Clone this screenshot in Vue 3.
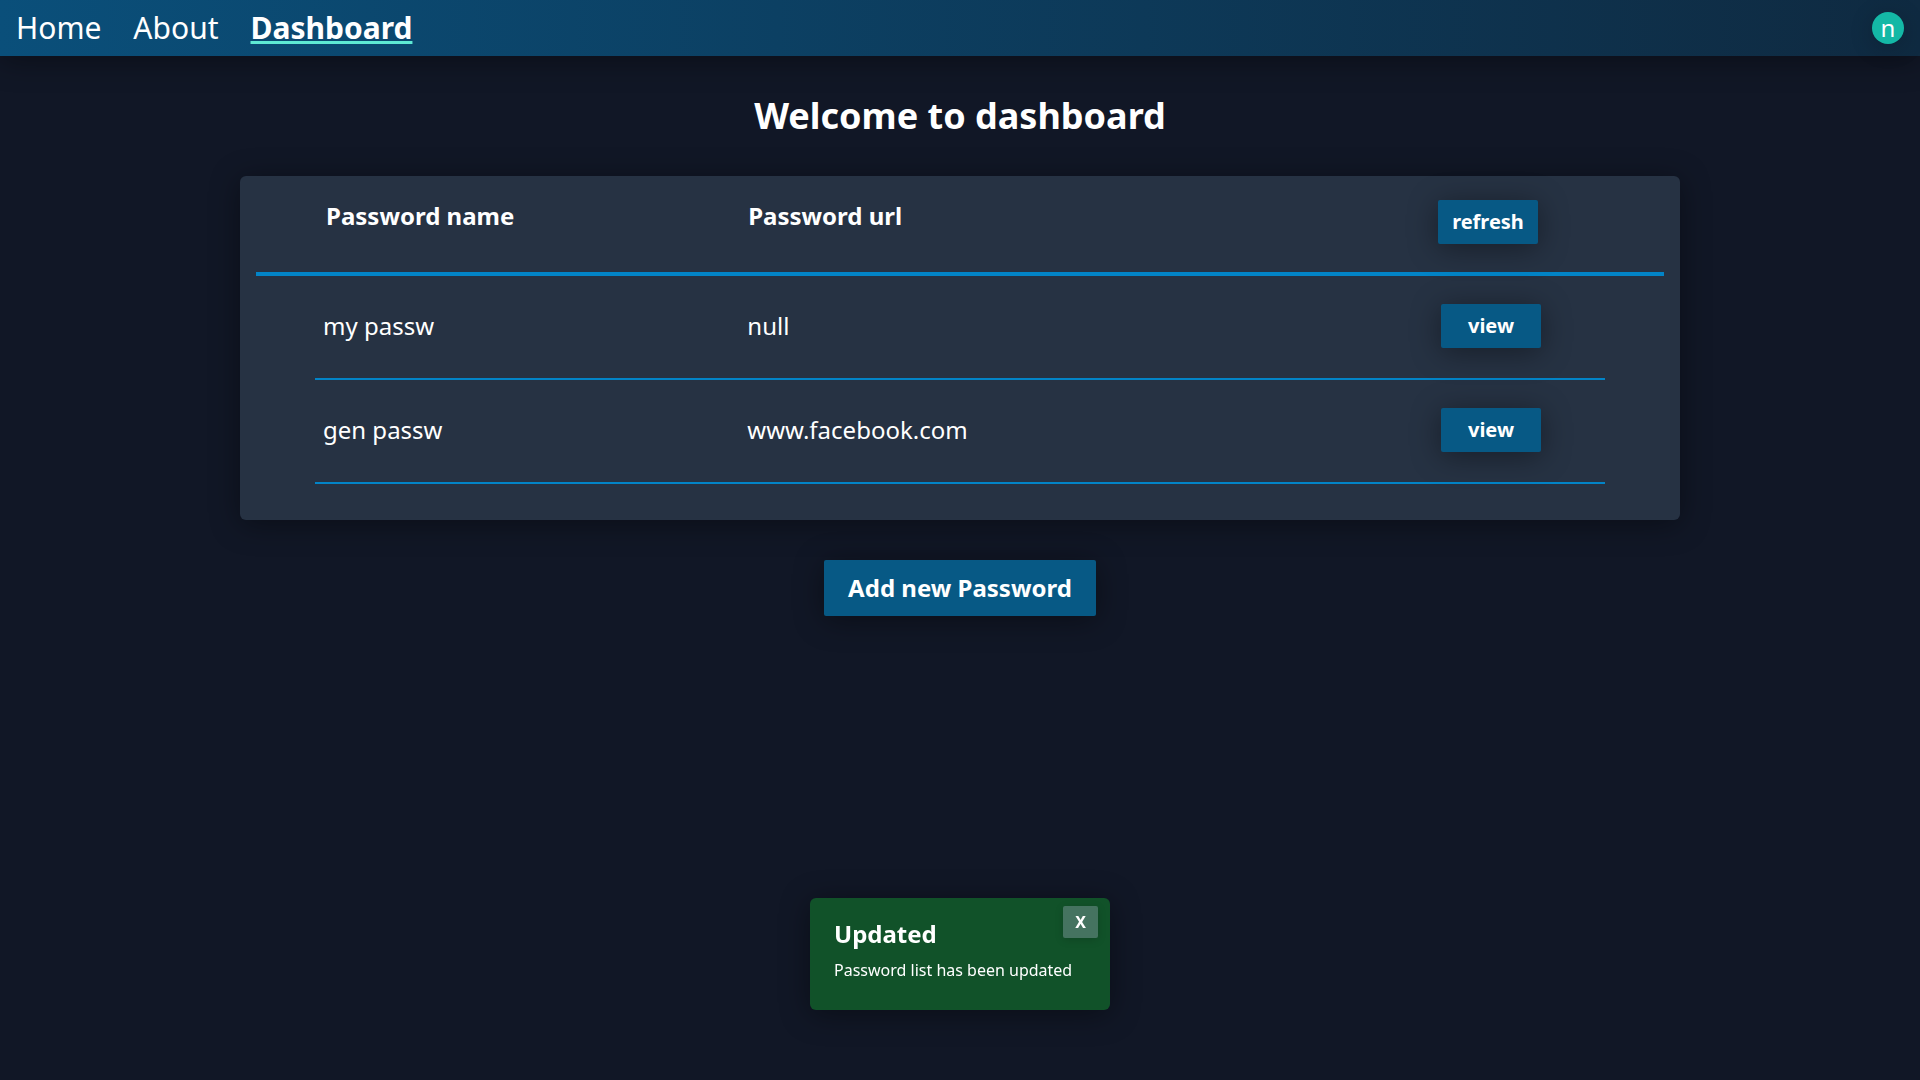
<script setup>
import { ref } from 'vue'

const passwords = ref([
  { id: 1, name: 'my passw', url: 'null' },
  { id: 2, name: 'gen passw', url: 'www.facebook.com' },
])
const toastOpen = ref(true)
</script>

<template>
  <div class="page">
    <header class="topbar">
      <nav class="nav">
        <a href="#home">Home</a>
        <a href="#about">About</a>
        <a href="#dashboard" class="active" aria-current="page">Dashboard</a>
      </nav>
      <button class="avatar" type="button">n</button>
    </header>

    <main class="content">
      <h1>Welcome to dashboard</h1>

      <table class="card">
        <thead>
          <tr>
            <th scope="col">Password name</th>
            <th scope="col">Password url</th>
            <th><button class="btn" type="button">refresh</button></th>
          </tr>
        </thead>
        <tbody>
          <tr v-for="item in passwords" :key="item.id">
            <td>{{ item.name }}</td>
            <td>{{ item.url }}</td>
            <td><button class="btn" type="button">view</button></td>
          </tr>
        </tbody>
      </table>

      <button class="btn large" type="button">Add new Password</button>
    </main>

    <section v-if="toastOpen" class="toast" role="status">
      <h2>Updated</h2>
      <p>Password list has been updated</p>
      <button class="close" type="button" @click="toastOpen = false">X</button>
    </section>
  </div>
</template>

<style>
body {
  margin: 0;
  background: #111726;
}
</style>

<style scoped>
.page {
  --shadow: 0 4px 30px rgba(0, 0, 0, 0.4);
  min-height: 100vh;
  color: #fff;
  font-family: "Noto Sans", sans-serif;
  font-size: 24px;
  line-height: 32px;
}

*,
*::before,
*::after {
  box-sizing: border-box;
}

button {
  border: 0;
  color: inherit;
  font-family: inherit;
  cursor: pointer;
}

.topbar {
  display: flex;
  align-items: center;
  justify-content: space-between;
  height: 56px;
  padding: 0 16px;
  background: linear-gradient(to right, #0a4f7a, #0f2a41);
  box-shadow: var(--shadow);
}

.nav {
  display: flex;
  gap: 32px;
  font-size: 30px;
  line-height: 36px;
}

.nav a {
  color: inherit;
  text-decoration: none;
}

.nav .active {
  font-weight: 700;
  text-decoration: underline;
  text-decoration-color: #5eead4;
  text-decoration-thickness: 3px;
}

.avatar {
  width: 32px;
  height: 32px;
  padding: 0;
  border-radius: 50%;
  background: #14b8a6;
  font-size: 24px;
  line-height: 32px;
  box-shadow: 0 4px 24px rgba(0, 0, 0, 0.2);
}

.content {
  display: flex;
  flex-direction: column;
  align-items: center;
  padding: 40px 0;
}

h1 {
  margin: 0 0 40px;
  font-size: 36px;
  line-height: 40px;
  font-weight: 700;
}

.card {
  display: block;
  width: 75%;
  margin-bottom: 40px;
  padding: 0 16px 36px;
  border-radius: 6px;
  background: #263243;
  box-shadow: var(--shadow);
}

thead,
tbody {
  display: block;
}

tr {
  display: grid;
  grid-template-columns: calc(35% - 2px) 1fr auto;
}

th,
td {
  padding: 0;
  text-align: left;
}

thead tr {
  align-items: start;
  padding: 24px 126px 28px 70px;
  border-bottom: 4px solid #0284c7;
}

tbody tr {
  align-items: center;
  margin: 0 59px;
  padding: 28px 64px 30px 8px;
  border-bottom: 2px solid #0284c7;
}

.btn {
  display: block;
  min-width: 100px;
  padding: 8px 12px;
  border-radius: 2px;
  background: #075985;
  font-size: 20px;
  line-height: 28px;
  font-weight: 700;
  box-shadow: var(--shadow);
}

.btn.large {
  padding: 12px 24px;
  font-size: 24px;
  line-height: 32px;
}

.toast {
  position: fixed;
  bottom: 70px;
  left: 50%;
  width: 300px;
  padding: 20px 24px 28px;
  border-radius: 6px;
  background: #115229;
  box-shadow: var(--shadow);
  transform: translateX(-50%);
}

.toast h2 {
  margin: 0 0 8px;
  font-size: 24px;
  line-height: 32px;
  font-weight: 700;
}

.toast p {
  margin: 0;
  font-size: 16px;
  line-height: 24px;
}

.close {
  position: absolute;
  top: 8px;
  right: 12px;
  padding: 4px 12px;
  border-radius: 2px;
  background: #457360;
  font-size: 16px;
  line-height: 24px;
  font-weight: 700;
  box-shadow: 0 2px 8px rgba(0, 0, 0, 0.15);
}
</style>
